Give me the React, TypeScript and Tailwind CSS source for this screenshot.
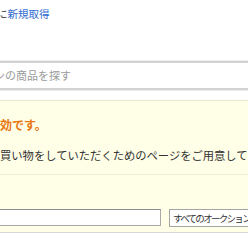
export default function App() {
  return (
    <div
      className="w-[248px] h-[248px] overflow-hidden bg-white"
      style={{ fontFamily: '"Noto Sans CJK JP", "Noto Sans", sans-serif' }}
    >
      {/* top link row */}
      <div className="h-[60px] pt-[8px]">
        <p className="-ml-[3px] text-[10.5px] leading-[12px] whitespace-nowrap text-[#333]">
          に<a href="#" className="text-[#2f6bd0]">新規取得</a>
        </p>
      </div>

      {/* search field */}
      <div className="h-[31px] border-y border-[#ececec] -mx-[4px]">
        <div className="h-full border-y-2 border-[#d2d2d2] flex items-center">
          <span className="-ml-[2px] text-[11px] text-[#9a9a9a] whitespace-nowrap">
            ンの商品を探す
          </span>
        </div>
      </div>

      {/* notice box */}
      <div className="mt-[9px] bg-[#fffee6] border-t border-[#ebe9d0] border-b border-b-[#d8d8d8] -mx-[4px] px-[4px] pb-[5px]">
        <p className="mt-[15px] h-[18px] leading-[18px] text-[12px] font-bold text-[#e8750f] whitespace-nowrap">
          効です。
        </p>
        <p className="mt-[13px] h-[16px] leading-[16px] text-[11.3px] text-[#333] whitespace-nowrap">
          買い物をしていただくためのページをご用意しています
        </p>
        <div className="mt-[11px] h-px bg-[#efecd4] -mx-[4px]" />
        <div className="mt-[34px] flex items-start gap-[8px]">
          <div className="shrink-0 -ml-[14px] w-[175px] h-[17px] bg-white border border-[#a9a9a9] border-t-[#8f8f8f]" />
          <div className="shrink-0 w-[110px] h-[18px] bg-white border border-[#a5a5a5] flex items-center pl-[3px]">
            <span className="text-[9.5px] tracking-[-1.7px] text-[#333] whitespace-nowrap">
              すべてのオークション
            </span>
          </div>
        </div>
      </div>
    </div>
  );
}
